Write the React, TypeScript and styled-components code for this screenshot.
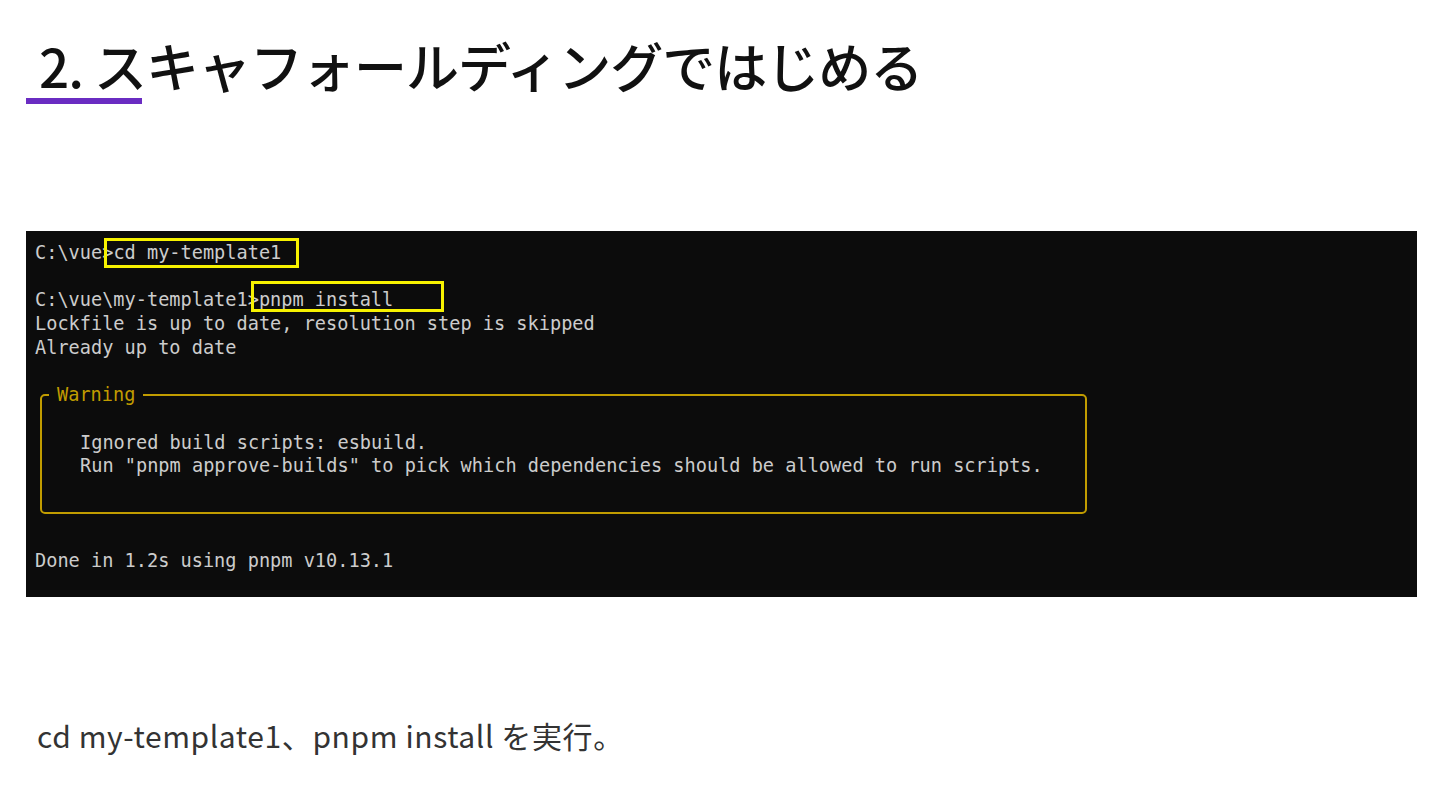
import React from 'react';
import styled, { createGlobalStyle } from 'styled-components';

const GlobalStyle = createGlobalStyle`
  html, body {
    margin: 0;
    padding: 0;
    background: #ffffff;
  }
  body {
    width: 1440px;
    height: 810px;
    overflow: hidden;
    font-family: "Noto Sans CJK JP", "Noto Sans", sans-serif;
  }
`;

const Slide = styled.div`
  display: flex;
  flex-direction: column;
  padding: 0 23px 0 26px;
  height: 810px;
  box-sizing: border-box;
`;

const TitleBlock = styled.header`
  display: flex;
  flex-direction: column;
  align-items: flex-start;
  padding-top: 36px;
`;

const Title = styled.h1`
  margin: 0 0 0 13px;
  font-size: 53px;
  line-height: 58px;
  font-weight: 500;
  color: #111111;
  letter-spacing: -1px;
`;

const Accent = styled.div`
  width: 116px;
  height: 6px;
  margin-top: 4px;
  background: #6a2cc2;
`;

const Terminal = styled.section`
  margin-top: 127px;
  background: #0c0c0c;
  height: 366px;
  box-sizing: border-box;
  padding: 10px 9px 0;
  font-family: "DejaVu Sans Mono", "Liberation Mono", monospace;
  font-size: 18.6px;
  line-height: 23.7px;
  color: #cccccc;
  white-space: pre;
`;

const Line = styled.div`
  height: 23.7px;
`;

const Cmd = styled.span`
  position: relative;
`;

const Highlight = styled.span<{ $l: number; $r: number; $t: number; $b: number }>`
  position: absolute;
  left: ${p => p.$l}px;
  right: ${p => p.$r}px;
  top: ${p => p.$t}px;
  bottom: ${p => p.$b}px;
  border: 3px solid #f7f200;
  pointer-events: none;
`;

const WarnBox = styled.fieldset`
  margin: 0 0 12px 5px;
  width: 1047px;
  box-sizing: border-box;
  padding: 0 0 10px 0;
  border: 2px solid #c19c00;
  border-radius: 5px;
`;

const WarnLegend = styled.legend`
  margin-left: 7px;
  padding: 0 8px;
  color: #c19c00;
  line-height: 23.7px;
`;

const WarnBody = styled.div`
  padding-left: 38px;
`;

const Caption = styled.p`
  margin: 118px 0 0 11px;
  font-size: 30px;
  line-height: 40px;
  font-weight: 400;
  color: #333333;
  letter-spacing: 0.6px;
`;

export default function App() {
  return (
    <>
      <GlobalStyle />
      <Slide>
        <TitleBlock>
          <Title>2. スキャフォールディングではじめる</Title>
          <Accent />
        </TitleBlock>

        <Terminal>
          <Line>
            C:\vue&gt;<Cmd>cd my-template1<Highlight $l={-9} $r={-18} $t={-4} $b={-5} /></Cmd>
          </Line>
          <Line />
          <Line>
            C:\vue\my-template1&gt;<Cmd>pnpm install<Highlight $l={-8} $r={-51} $t={-8} $b={-2} /></Cmd>
          </Line>
          <Line>Lockfile is up to date, resolution step is skipped</Line>
          <Line>Already up to date</Line>
          <Line />
          <WarnBox>
            <WarnLegend>Warning</WarnLegend>
            <WarnBody>
              <Line />
              <Line>Ignored build scripts: esbuild.</Line>
              <Line>Run "pnpm approve-builds" to pick which dependencies should be allowed to run scripts.</Line>
              <Line />
            </WarnBody>
          </WarnBox>
          <Line />
          <Line>Done in 1.2s using pnpm v10.13.1</Line>
        </Terminal>

        <Caption>cd my-template1、pnpm install を実行。</Caption>
      </Slide>
    </>
  );
}
